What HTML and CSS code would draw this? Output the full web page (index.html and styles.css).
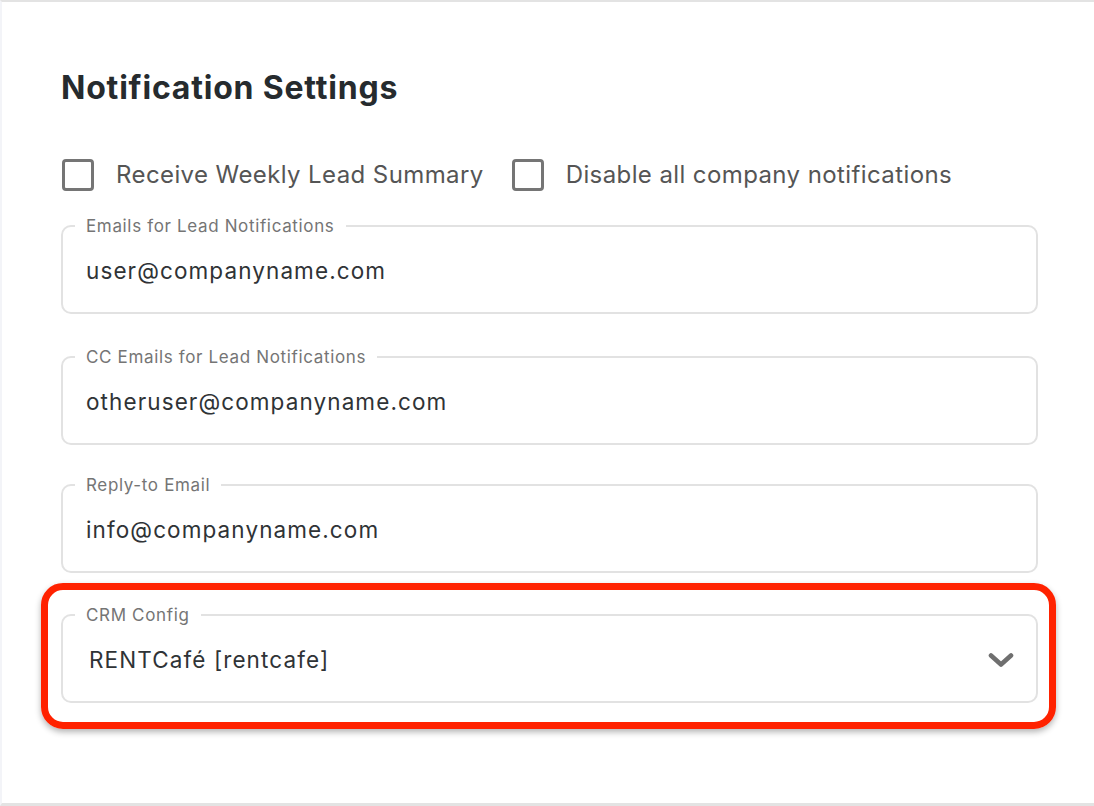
FILE: index.html
```html
<!DOCTYPE html>
<html>
<head>
<meta charset="utf-8">
<link rel="stylesheet" href="styles.css">
</head>
<body>
<div class="page">
  <h1 class="title">Notification Settings</h1>
  <div class="checks">
    <label class="check"><span class="box"></span><span class="check-text">Receive Weekly Lead Summary</span></label>
    <label class="check"><span class="box"></span><span class="check-text">Disable all company notifications</span></label>
  </div>
  <fieldset class="field">
    <legend class="legend">Emails for Lead Notifications</legend>
    <div class="value">user@companyname.com</div>
  </fieldset>
  <fieldset class="field">
    <legend class="legend">CC Emails for Lead Notifications</legend>
    <div class="value">otheruser@companyname.com</div>
  </fieldset>
  <fieldset class="field field-tight">
    <legend class="legend">Reply-to Email</legend>
    <div class="value">info@companyname.com</div>
  </fieldset>
  <div class="highlight">
    <fieldset class="field field-select">
      <legend class="legend">CRM Config</legend>
      <div class="select-row">
        <div class="value value-select">RENTCafé [rentcafe]</div>
        <svg class="chevron" width="26" height="16" viewBox="0 0 26 16"><path d="M3 3.5 L13 12.5 L23 3.5" fill="none" stroke="#6f6f6f" stroke-width="4.6" stroke-linecap="round" stroke-linejoin="round"/></svg>
      </div>
    </fieldset>
  </div>
</div>
</body>
</html>
```
FILE: styles.css
```css
html, body {
  margin: 0;
  padding: 0;
  background: #ffffff;
}
body {
  font-family: "Inter", "Liberation Sans", sans-serif;
}
.page {
  box-sizing: border-box;
  width: 1094px;
  height: 806px;
  border-top: 2px solid #e3e3e3;
  border-left: 2px solid #f3f4f8;
  border-bottom: 3px solid #e3e3e3;
  padding: 0 0 0 59px;
  overflow: hidden;
}
.title {
  margin: 68px 0 0 0;
  font-size: 32px;
  line-height: 36px;
  font-weight: 700;
  color: #262b2e;
  letter-spacing: 0.8px;
}
.checks {
  display: flex;
  gap: 27px;
  margin-top: 53px;
  height: 32px;
  align-items: center;
}
.check {
  display: flex;
  align-items: center;
  gap: 22px;
}
.box {
  box-sizing: border-box;
  width: 32px;
  height: 32px;
  margin-left: 1px;
  border: 3px solid #757575;
  border-radius: 4px;
}
.check-text {
  font-size: 24px;
  color: #555555;
  line-height: 28px;
  letter-spacing: 0.4px;
}
.field {
  box-sizing: border-box;
  width: 977px;
  margin: 25px 0 0 0;
  border: 2px solid #e2e2e2;
  border-radius: 10px;
  padding: 22px 23px 28px 23px;
  min-width: 0;
}
.field + .field {
  margin-top: 33px;
}
.field + .field-tight {
  margin-top: 30px;
}
.legend {
  font-size: 17px;
  line-height: 20px;
  color: #757575;
  padding: 0 11px;
  margin-left: -11px;
  letter-spacing: 0.65px;
}
.value {
  font-size: 22.5px;
  line-height: 26px;
  color: #2f3336;
  letter-spacing: 1.1px;
}
.highlight {
  margin: 10px 0 0 -20px;
  width: 1015px;
  box-sizing: border-box;
  border: 7px solid #ff2200;
  border-radius: 22px;
  padding: 15px 12px 19px 13px;
  box-shadow: 0 3px 6px rgba(0, 0, 0, 0.3);
}
.highlight .field {
  margin-top: 0;
}
.select-row {
  display: flex;
  align-items: center;
  justify-content: space-between;
}
.value-select {
  padding-left: 3px;
}
.chevron {
  margin-right: -1px;
}
```
